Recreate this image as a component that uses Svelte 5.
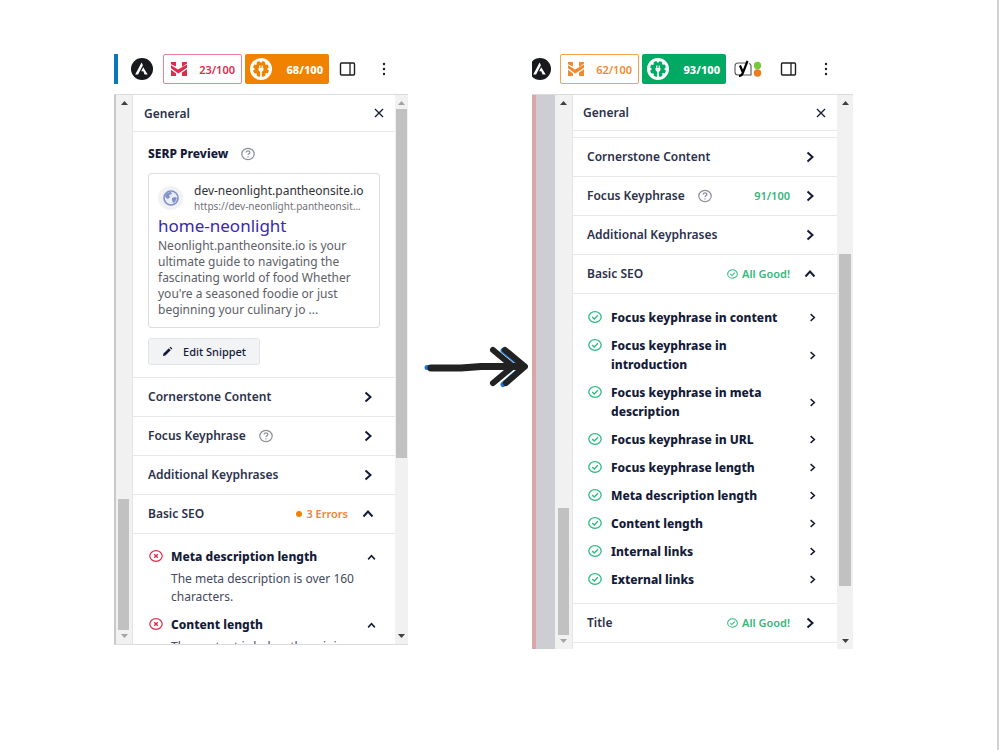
<script>
  const before = {
    content: { score: '23/100', seo: '68/100' },
    rows: [
      { title: 'Cornerstone Content' },
      { title: 'Focus Keyphrase', help: true },
      { title: 'Additional Keyphrases' },
      { title: 'Basic SEO', status: '3 Errors', kind: 'errors', open: true },
    ],
    checks: [
      { title: 'Meta description length', text: 'The meta description is over 160 characters.' },
      { title: 'Content length', text: 'The content is below the minimum of words.' },
    ],
  };

  const after = {
    content: { score: '62/100', seo: '93/100' },
    rows: [
      { title: 'Cornerstone Content' },
      { title: 'Focus Keyphrase', help: true, status: '91/100', kind: 'score' },
      { title: 'Additional Keyphrases' },
      { title: 'Basic SEO', status: 'All Good!', kind: 'good', open: true },
    ],
    checks: [
      'Focus keyphrase in content',
      'Focus keyphrase in introduction',
      'Focus keyphrase in meta description',
      'Focus keyphrase in URL',
      'Focus keyphrase length',
      'Meta description length',
      'Content length',
      'Internal links',
      'External links',
    ],
  };
</script>

{#snippet astra()}
  <svg class="astra" viewBox="0 0 22 22" aria-hidden="true">
    <circle cx="11" cy="11" r="11" fill="#17191d" />
    <path d="M10.6 4.5 4.2 16.6h2.9l4.8-9.4zM12.2 9.2l-2 4h2.1l1.3 3.4h3.1z" fill="#fff" />
  </svg>
{/snippet}

{#snippet headline()}
  <svg class="mark" viewBox="0 0 18 16" fill="currentColor" aria-hidden="true">
    <path d="M1 1h5v4.600L1 3.200zM12 1h5v1.500l-5 3.500z" />
    <path d="M1 4.300 8 8.600l9-5v3.200L8.300 12.600 1 7.300z" />
    <path d="M1 8.800l5 3.600V15H1zM12 11.500l5-3.200V15h-5z" />
  </svg>
{/snippet}

{#snippet gear()}
  <svg class="gear" viewBox="0 0 22 22" aria-hidden="true">
    <circle cx="11" cy="11" r="11" fill="#fff" />
    <g fill="currentColor">
      <circle cx="11" cy="11" r="6.500" />
      {#each [0, 45, 90, 135, 180, 225, 270, 315] as angle}
        <rect x="9.200" y="3" width="3.600" height="5" rx="1" transform="rotate({angle + 22} 11 11)" />
      {/each}
    </g>
    <path d="M8.500 10h5v1.500a2.500 2.500 0 0 1-1.700 2.300V18h-1.600v-4.200a2.500 2.500 0 0 1-1.700-2.300zM9.200 7.500h1.200V10H9.200zM11.600 7.500h1.200V10h-1.200z" fill="#fff" />
  </svg>
{/snippet}

{#snippet sidebarIcon()}
  <button class="tool" aria-label="Settings">
    <svg class="side-icon" viewBox="0 0 16 14" fill="none" stroke="#1e1e1e" aria-hidden="true">
      <rect x="1" y="1" width="14" height="12" rx="1" stroke-width="1.400" />
      <path d="M10.500 1v12" stroke-width="1.300" />
    </svg>
  </button>
{/snippet}

{#snippet dots()}
  <button class="tool dots" aria-label="Options">
    <svg viewBox="0 0 4 14" aria-hidden="true">
      <circle cx="2" cy="2" r="1.200" /><circle cx="2" cy="7" r="1.200" /><circle cx="2" cy="12" r="1.200" />
    </svg>
  </button>
{/snippet}

{#snippet help()}
  <svg class="help" viewBox="0 0 14 14" fill="none" stroke="#8c8f9a" stroke-width="1.200" aria-hidden="true">
    <ellipse cx="7" cy="7" rx="6.200" ry="5.700" />
    <path d="M5.200 5.600c0-2.300 3.700-2.300 3.700 0 0 1.300-1.900 1.200-1.900 2.500M7 9.300v1.200" />
  </svg>
{/snippet}

{#snippet chevron(up, small)}
  <svg class="chevron" class:up class:small viewBox="0 0 12 12" fill="none" stroke="#141b38" stroke-width="2" aria-hidden="true">
    <path d="M3.500 1.500 8.500 6l-5 4.500" />
  </svg>
{/snippet}

{#snippet tick()}
  <svg class="tick" viewBox="0 0 14 12" fill="none" stroke="#2dbb80" stroke-width="1.300" aria-hidden="true">
    <ellipse cx="7" cy="6" rx="6.200" ry="5.300" />
    <path d="m4.200 6 2 2 3.700-3.800" />
  </svg>
{/snippet}

{#snippet cross()}
  <svg class="tick" viewBox="0 0 14 12" fill="none" stroke="#df2a4a" stroke-width="1.200" aria-hidden="true">
    <ellipse cx="7" cy="6" rx="6.200" ry="5.300" />
    <path d="m5.200 4.200 3.600 3.600m0-3.600L5.200 7.800" stroke-width="1.400" />
  </svg>
{/snippet}

{#snippet scrollbar(name, dimUp, dimDown)}
  <div class="scrollbar {name}" aria-hidden="true">
    <svg class:dim={dimUp} viewBox="0 0 7 4"><path d="M0 4 3.500 0 7 4z" /></svg>
    <div class="track"><div class="thumb"></div></div>
    <svg class:dim={dimDown} viewBox="0 0 7 4"><path d="M0 0h7L3.500 4z" /></svg>
  </div>
{/snippet}

{#snippet panelHead()}
  <header class="panel-head">
    <h2>General</h2>
    <button class="close" aria-label="Close">
      <svg viewBox="0 0 10 10" fill="none" stroke="#141b38" stroke-width="1.300" aria-hidden="true"><path d="m1 1 8 8M9 1 1 9" /></svg>
    </button>
  </header>
{/snippet}

{#snippet row(item)}
  <button class="row" aria-expanded={!!item.open}>
    <span class="row-title">{item.title}</span>
    {#if item.help}{@render help()}{/if}
    {#if item.status}
      <span class="status {item.kind}">
        {#if item.kind === 'good'}{@render tick()}{/if}
        {#if item.kind === 'errors'}<span class="dot"></span>{/if}
        {item.status}
      </span>
    {/if}
    {@render chevron(item.open, false)}
  </button>
{/snippet}

<main>
  <section class="shot before">
    <div class="toolbar">
      <span class="blue-bar"></span>
      {@render astra()}
      <button class="badge outline red">{@render headline()}{before.content.score}</button>
      <button class="badge solid orange">{@render gear()}{before.content.seo}</button>
      {@render sidebarIcon()}
      {@render dots()}
    </div>
    <div class="window">
      {@render scrollbar('outer', false, true)}
      <div class="panel">
        {@render panelHead()}
        <div class="serp">
          <h3>SERP Preview {@render help()}</h3>
          <article class="snippet">
            <div class="site">
              <span class="favicon">
                <svg viewBox="0 0 16 16" aria-hidden="true">
                  <circle cx="8" cy="8" r="7" fill="#e8edfa" stroke="#8490c8" stroke-width="1.600" />
                  <path d="M2 6c1-3 4-4 6-4l1 2-3 1 1 2-2 2-2-1zM9 8l3-1 2 1-2 4-2 1-1-3z" fill="#8490c8" />
                </svg>
              </span>
              <div class="site-text">
                <span class="domain">dev-neonlight.pantheonsite.io</span>
                <span class="url">https://dev-neonlight.pantheonsit...</span>
              </div>
            </div>
            <a href="#home">home-neonlight</a>
            <p>
              Neonlight.pantheonsite.io is your<br />ultimate guide to navigating the<br />fascinating world of food Whether<br />you're a seasoned foodie or just<br />beginning your culinary jo ...
            </p>
          </article>
          <button class="edit">
            <svg viewBox="0 0 12 12" aria-hidden="true"><path d="m1 11 .6-2.800L7.500 2.500l2 2L3.700 10.400zM8.300 1.700l1-1 2 2-1 1z" fill="#141b38" /></svg>
            Edit Snippet
          </button>
        </div>
        {#each before.rows as item}{@render row(item)}{/each}
        <ul class="checks">
          {#each before.checks as check}
            <li>
              {@render cross()}
              <div class="check-body">
                <strong>{check.title}</strong>
                <p>{check.text}</p>
              </div>
              {@render chevron(true, true)}
            </li>
          {/each}
        </ul>
      </div>
      {@render scrollbar('inner', true, false)}
    </div>
  </section>

  <div class="arrow">
    <svg viewBox="0 0 104 42" fill="none" stroke-linecap="round" stroke-linejoin="round" aria-hidden="true">
      <path d="M3 21.500h88M79 4.500l20 16.500-20 17.500" stroke="#1976c9" stroke-width="5" />
      <path d="M69 4l20 16.500-20 16.500M81 4l20 16.500-19 16.500" stroke="#222" stroke-width="6" />
      <path d="M7 22h30l20-1.500h37" stroke="#222" stroke-width="7" />
    </svg>
  </div>

  <section class="shot after">
    <div class="toolbar">
      {@render astra()}
      <button class="badge outline amber">{@render headline()}{after.content.score}</button>
      <button class="badge solid green">{@render gear()}{after.content.seo}</button>
      <button class="tool" aria-label="Yoast SEO">
        <svg class="yoast" viewBox="0 0 28 18" aria-hidden="true">
          <path d="M12 3H4a3 3 0 0 0-3 3v6a3 3 0 0 0 3 3h13V5.500a3 3 0 0 0-2-2" fill="none" stroke="#555" stroke-width="1.100" />
          <path d="m6 5.500 2.700 6.500M13.500 1 9 12.500Q8 16 5 16" fill="none" stroke="#000" stroke-width="2.200" />
          <circle cx="23.500" cy="5.500" r="3.700" fill="#77c93c" />
          <circle cx="23.500" cy="13" r="3.700" fill="#ee7c1b" />
        </svg>
      </button>
      {@render sidebarIcon()}
      {@render dots()}
    </div>
    <div class="window">
      <div class="editor-edge"></div>
      {@render scrollbar('outer', false, true)}
      <div class="panel">
        {@render panelHead()}
        <div class="scrolled"></div>
        {#each after.rows as item}{@render row(item)}{/each}
        <ul class="checks">
          {#each after.checks as check}
            <li>
              {@render tick()}
              <div class="check-body"><strong>{check}</strong></div>
              {@render chevron(false, true)}
            </li>
          {/each}
        </ul>
        {@render row({ title: 'Title', status: 'All Good!', kind: 'good' })}
        <div class="next-row"></div>
      </div>
      {@render scrollbar('inner', false, false)}
    </div>
  </section>
</main>

<style>
  :global(body) {
    background: #fff;
    font-family: 'Noto Sans', 'Open Sans', sans-serif;
    color: #141b38;
  }
  * { box-sizing: border-box; }
  h2, h3, p, ul { margin: 0; padding: 0; }
  button {
    font: inherit;
    color: inherit;
    background: none;
    border: 0;
    padding: 0;
    cursor: pointer;
  }
  svg { display: block; flex: none; }

  main {
    display: grid;
    grid-template-columns: 294fr 124fr 321fr;
    align-items: start;
    min-height: 100vh;
    padding: 54px 144px 0 114px;
    border-right: 2px solid #d2d2d2;
    margin-right: 1px;
  }

  .arrow { padding: 292px 4px 0 16px; }

  .toolbar {
    display: flex;
    align-items: center;
    height: 30px;
    margin-bottom: 10px;
  }
  .blue-bar { width: 4px; height: 30px; background: #0a78b8; }
  .astra { width: 22px; height: 22px; margin: 0 10px 0 13px; }
  .after .astra { margin-left: -3px; margin-right: 9px; }
  .after .toolbar { overflow: hidden; }

  .badge {
    display: flex;
    align-items: center;
    justify-content: space-between;
    height: 30px;
    padding: 0 6px;
    border-radius: 2px;
    font-size: 11px;
    white-space: nowrap;
  }
  .outline { width: 79px; border: 1px solid; font-weight: 600; }
  .solid { width: 84px; margin-left: 3px; padding-left: 5px; color: #fff; font-weight: 800; }
  .red { color: #df2a4a; border-color: #ec8095; }
  .amber { color: #f18a2e; border-color: #f8a24c; }
  .orange { background: #f18200; }
  .green { background: #00aa63; }
  .mark { width: 18px; height: 16px; }
  .gear { width: 22px; height: 22px; }
  .orange .gear { color: #f18200; }
  .green .gear { color: #00aa63; }

  .tool { margin-left: 10px; }
  .side-icon { width: 17px; height: 14px; }
  .dots { margin-left: 26px; }
  .dots svg { width: 4px; height: 14px; fill: #1e1e1e; }
  .yoast { width: 28px; height: 18px; }
  .after .tool { margin-left: 8px; }
  .after .tool + .tool { margin-left: 18px; }
  .after .tool + .dots { margin-left: 27px; }

  .window {
    display: flex;
    max-height: 551px;
    border-top: 1px solid #dcdcde;
  }
  .before .window { border-bottom: 1px solid #dcdcde; }
  .after .window { max-height: 555px; }
  .panel {
    flex: 1;
    min-width: 0;
    overflow: hidden;
    border-left: 1px solid #e4e4e6;
  }

  .scrollbar {
    display: flex;
    flex-direction: column;
    align-items: center;
    flex: none;
    width: 13px;
    padding: 6px 1px;
    background: #f1f1f1;
  }
  .scrollbar svg { width: 7px; height: 4px; fill: #404040; }
  .scrollbar svg.dim { fill: #a3a3a3; }
  .outer { width: 17px; }
  .before .outer { width: 18px; border-left: 2px solid #c8c8c8; }
  .track {
    display: flex;
    flex-direction: column;
    flex: 1;
    width: 100%;
    padding: 4px 0;
  }
  .thumb { height: 67%; background: #c1c1c1; }
  .outer .track { justify-content: flex-end; padding: 2px 2px 4px; }
  .outer .thumb { height: 25%; }
  .before .outer .track { padding-left: 1px; }
  .after .inner { width: 16px; }
  .after .inner .track { justify-content: flex-end; padding: 0 1px 53px; }
  .after .inner .thumb { height: 69%; }
  .after .outer .thumb { height: 24%; }
  .editor-edge {
    width: 23px;
    background: #ccced3;
    border-left: 4px solid #dba6a8;
  }

  .panel-head {
    display: flex;
    align-items: center;
    justify-content: space-between;
    height: 37px;
    padding: 0 11px;
    border-bottom: 1px solid #e8e8eb;
  }
  .panel-head h2 { font-size: 12px; font-weight: 600; color: #2b314a; }
  .close svg { width: 10px; height: 10px; }
  .after .panel-head { height: 36px; padding-left: 10px; }
  .scrolled { height: 6px; }

  .serp { padding: 12px 15px; }
  h3 {
    display: flex;
    align-items: center;
    gap: 13px;
    font-size: 12px;
    line-height: 20px;
    font-weight: 800;
  }
  .help { width: 14px; height: 14px; }
  .snippet {
    margin-top: 9px;
    height: 155px;
    padding: 8px 9px;
    border: 1px solid #dcdde1;
    border-radius: 3px;
    white-space: nowrap;
  }
  .site { display: flex; align-items: center; gap: 11px; }
  .favicon {
    display: grid;
    place-items: center;
    width: 25px;
    height: 24px;
    border-radius: 50%;
    background: #f0f2f5;
  }
  .favicon svg { width: 16px; height: 16px; }
  .site-text { display: flex; flex-direction: column; }
  .domain { font-size: 12px; line-height: 17px; color: #303136; }
  .url { font-size: 10px; line-height: 14px; color: #6f7277; }
  .snippet a {
    display: block;
    font-size: 17px;
    line-height: 25px;
    color: #3a28b0;
    text-decoration: none;
  }
  .snippet p { font-size: 12px; line-height: 16px; color: #5c6066; }
  .edit {
    display: flex;
    align-items: center;
    gap: 10px;
    height: 27px;
    margin-top: 10px;
    padding: 0 13px;
    border: 1px solid #e2e4e8;
    border-radius: 3px;
    background: #f2f3f5;
    font-size: 11px;
    font-weight: 500;
  }
  .edit svg { width: 11px; height: 11px; }

  .row {
    display: flex;
    align-items: center;
    width: 100%;
    height: 39px;
    padding: 0 21px 1px 15px;
    border-top: 1px solid #e8e8eb;
    font-size: 12px;
    font-weight: 600;
    color: #2b314a;
  }
  .after .row { padding: 0 21px 1px 14px; }
  .row .help { margin-left: 13px; }
  .row .chevron { margin-left: auto; }
  .status {
    display: flex;
    align-items: center;
    gap: 4px;
    margin-left: auto;
    font-size: 11px;
  }
  .row .status + .chevron { margin-left: 14px; }
  .good, .score { color: #35b67c; }
  .errors { color: #f18235; }
  .status .tick { width: 11px; height: 10px; }
  .dot { width: 6px; height: 6px; border-radius: 50%; background: #f18200; }
  .chevron { width: 12px; height: 12px; }
  .chevron.up { transform: rotate(-90deg); }
  .chevron.small { width: 9px; height: 9px; }

  .checks {
    display: flex;
    flex-direction: column;
    gap: 9px;
    padding: 13px 19px 13px 16px;
    border-top: 1px solid #e8e8eb;
    list-style: none;
    font-size: 12px;
    line-height: 19px;
  }
  .after .checks { padding: 14px 20px 14px 15px; }
  .checks li { display: flex; align-items: center; gap: 9px; }
  .checks li > .tick { align-self: flex-start; width: 14px; height: 12px; margin-top: 3px; }
  .check-body { flex: 1; min-width: 0; }
  .checks strong { display: block; font-weight: 800; }
  .check-body p { margin: 4px -18px 0 0; line-height: 18px; color: #434960; }
  .before .checks li { align-items: flex-start; gap: 8px; }
  .before .checks .chevron { margin-top: 6px; }
  .after .check-body { padding-right: 20px; }
  .next-row { height: 8px; border-top: 1px solid #e8e8eb; }
</style>
